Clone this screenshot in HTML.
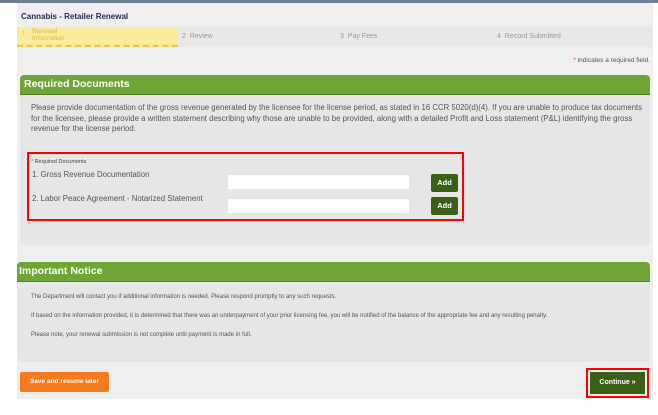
<!DOCTYPE html>
<html><head><style>
*{margin:0;padding:0;box-sizing:border-box}
body{width:658px;height:415px;background:#fff;font-family:"Liberation Sans",sans-serif;position:relative;overflow:hidden}
.topline{position:absolute;left:0;top:0;width:658px;height:3px;background:#6b7f91}
.main{position:absolute;left:17px;top:3px;width:636px;height:396px;background:#efefef}
.a{position:absolute}
.title{left:21px;top:12px;font-size:8px;font-weight:bold;color:#1f2b4a}
.steps{left:17px;top:27px;width:636px;height:20px;background:#e9e9e9}
.s1{left:17px;top:27px;width:161px;height:20px;background:#fbec9c;border-bottom:2px dashed #e8c24a}
.st{font-size:7px;color:#999}
.gh{background:#6da537;color:#fff;font-weight:bold;font-size:10.5px;padding:5px 4px;border-radius:4px 4px 0 0;border-bottom:1px solid #557f2a}
.panel{background:#e6e6e6;border-radius:0 0 4px 4px}
p.t{font-size:7.8px;color:#555;line-height:10.5px}
.inp{position:absolute;background:#fff;width:181px;height:14px}
.add{position:absolute;background:#3b5f17;color:#fff;font-weight:bold;font-size:7.5px;width:27px;height:18px;line-height:18px;text-align:center;border-radius:2px}
.n{font-size:6px;color:#555}
</style></head><body>
<div class="topline"></div>
<div class="main"></div>
<div class="a title">Cannabis - Retailer Renewal</div>
<div class="a steps"></div>
<div class="a s1"></div>
<div class="a st" style="left:22px;top:31px;color:#e8b43a;font-size:6px">1</div>
<div class="a st" style="left:32px;top:28px;color:#e8b43a;line-height:7px;font-size:6.5px">Renewal<br>Information</div>
<div class="a st" style="left:182px;top:33px">2&nbsp; Review</div>
<div class="a st" style="left:340px;top:33px">3&nbsp; Pay Fees</div>
<div class="a st" style="left:497px;top:33px">4&nbsp; Record Submitted</div>
<div class="a" style="right:8px;top:57px;font-size:6.5px;color:#555"><span style="color:#e33">*</span> indicates a required field.</div>
<div class="a gh" style="left:20px;top:75px;width:630px;height:20px;padding:3px 4px">Required Documents</div>
<div class="a panel" style="left:20px;top:95px;width:630px;height:150px"></div>
<p class="a t" style="left:31px;top:103px;width:612px">Please provide documentation of the gross revenue generated by the licensee for the license period, as stated in 16 CCR 5020(d)(4). If you are unable to produce tax documents for the licensee, please provide a written statement describing why those are unable to be provided, along with a detailed Profit and Loss statement (P&amp;L) identifying the gross revenue for the license period.</p>
<div class="a" style="left:27px;top:152px;width:437px;height:69px;border:2px solid #f00"></div>
<div class="a" style="left:31px;top:159px;font-size:5.5px;color:#444"><span style="color:#e33">*</span> Required Documents</div>
<div class="a t" style="left:32px;top:170px;font-size:7.8px;color:#555">1. Gross Revenue Documentation</div>
<div class="a t" style="left:32px;top:194px;font-size:7.8px;color:#555">2. Labor Peace Agreement - Notarized Statement</div>
<div class="inp" style="left:228px;top:175px"></div>
<div class="inp" style="left:228px;top:199px"></div>
<div class="add" style="left:431px;top:174px">Add</div>
<div class="add" style="left:431px;top:197px">Add</div>
<div class="a gh" style="left:17px;top:262px;width:633px;height:20px;padding:3px 2px">Important Notice</div>
<div class="a panel" style="left:17px;top:282px;width:633px;height:80px"></div>
<div class="a n" style="left:31px;top:294px">The Department will contact you if additional information is needed. Please respond promptly to any such requests.</div>
<div class="a n" style="left:31px;top:313px">If based on the information provided, it is determined that there was an underpayment of your prior licensing fee, you will be notified of the balance of the appropriate fee and any resulting penalty.</div>
<div class="a n" style="left:31px;top:332px">Please note, your renewal submission is not complete until payment is made in full.</div>
<div class="a" style="left:20px;top:372px;width:89px;height:20px;background:#f57a20;color:#fff;font-weight:bold;font-size:6.5px;line-height:20px;text-align:center;border-radius:2px">Save and resume later</div>
<div class="a" style="left:586px;top:368px;width:63px;height:30px;border:2px solid #f00"></div>
<div class="a" style="left:590px;top:372px;width:55px;height:22px;background:#3b5f17;color:#fff;font-weight:bold;font-size:7px;line-height:22px;text-align:center">Continue »</div>
</body></html>
